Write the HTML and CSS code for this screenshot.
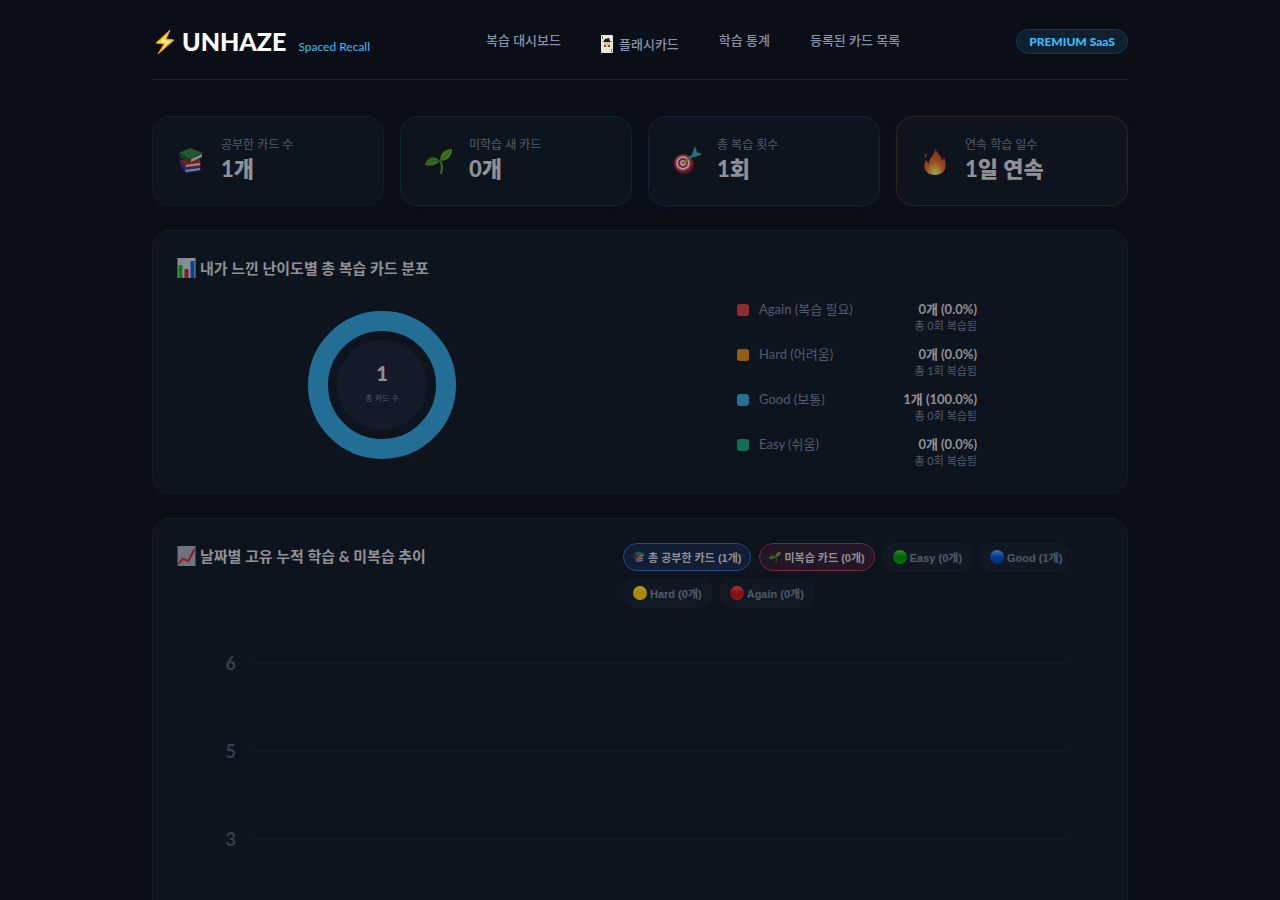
FILE: index.html
```html
<!DOCTYPE html>
<html lang="ko">
<head>
  <meta charset="UTF-8">
  <meta name="viewport" content="width=device-width, initial-scale=1.0">
  <title>UNHAZE - Spaced Recall</title>
  <link rel="stylesheet" href="styles.css">
</head>
<body>
  <!-- Shared icons -->
  <svg class="sprite" aria-hidden="true">
    <symbol id="icon-books" viewBox="0 0 28 28">
      <path d="M4 19l4 7 16-2-1-5z" fill="#2b3c9c"/>
      <path d="M8 23l15-2v2L9 25z" fill="#c9cbd2"/>
      <path d="M3 13l5 8 16-2-1-7z" fill="#c4231e"/>
      <path d="M9 18l14-2v2L9 20z" fill="#dedede"/>
      <path d="M2 12l2 7 4 2-3-7z" fill="#293b97"/>
      <path d="M2 6L13 1l13 5-13 6z" fill="#32843a"/>
      <path d="M2 6l11 6v4L3 11z" fill="#1c5726"/>
      <path d="M14 12l11-5v3l-11 5z" fill="#d5d8d2"/>
    </symbol>
    <symbol id="icon-sprout" viewBox="0 0 28 28">
      <path d="M15 14c3 3 2 8 1 13" fill="none" stroke="#59a51b" stroke-width="2"/>
      <path d="M15 14c0-8 5-12 12-12 0 7-4 12-12 12z" fill="#63b320"/>
      <path d="M15 14C10 8 3 9 0 18c7 2 11 0 15-4z" fill="#579f1b"/>
      <path d="M15 14c4-3 7-6 10-10M15 14c-5-1-9 0-13 3" fill="none" stroke="#397514"/>
    </symbol>
  </svg>

  <div class="container">
    <header class="site-header">
      <a href="#" class="logo">
        <svg class="logo-bolt" viewBox="0 0 20 26" aria-hidden="true">
          <path d="M15 1L1 14l8 1-6 10L19 11l-8-1z" fill="#ffc928" stroke="#f59a13"/>
          <path d="M12 6l-7 7 6 1-3 5 7-7-6-1z" fill="#fff5a8"/>
        </svg>
        <span class="logo-name">UNHAZE</span>
        <span class="logo-tagline">Spaced Recall</span>
      </a>
      <nav class="main-nav">
        <a href="#">복습 대시보드</a>
        <a href="#" class="with-icon">
          <svg viewBox="0 0 12 18" aria-hidden="true">
            <rect width="12" height="18" rx="1" fill="#eee8dc"/>
            <path d="M2 7l2-3 4-1 1 3 2 1z" fill="#20252a"/>
            <rect x="3" y="7" width="6" height="5" fill="#dcc0a8"/>
            <path d="M3 10h2v2H3zM7 10h2v2H7z" fill="#a33c39"/>
            <path d="M1 1h1v3H1zM10 14h1v3h-1z" fill="#77736e"/>
          </svg>
          플래시카드
        </a>
        <a href="#">학습 통계</a>
        <a href="#">등록된 카드 목록</a>
      </nav>
      <span class="badge">PREMIUM SaaS</span>
    </header>

    <main>
      <!-- Summary cards -->
      <section class="stats">
        <div class="stat-card">
          <svg class="stat-icon" aria-hidden="true"><use href="#icon-books"/></svg>
          <div>
            <div class="stat-label">공부한 카드 수</div>
            <div class="stat-value">1개</div>
          </div>
        </div>
        <div class="stat-card green">
          <svg class="stat-icon" aria-hidden="true"><use href="#icon-sprout"/></svg>
          <div>
            <div class="stat-label">미학습 새 카드</div>
            <div class="stat-value">0개</div>
          </div>
        </div>
        <div class="stat-card blue">
          <svg class="stat-icon" viewBox="0 0 28 28" aria-hidden="true">
            <ellipse cx="11" cy="17" rx="10" ry="10" fill="#8f1720"/>
            <circle cx="10" cy="16" r="9" fill="#d52b34"/>
            <circle cx="10" cy="16" r="7" fill="#eee"/>
            <circle cx="10" cy="16" r="5" fill="#d52b34"/>
            <circle cx="10" cy="16" r="3" fill="#eee"/>
            <circle cx="10" cy="16" r="1" fill="#c5242e"/>
            <path d="M10 16l9-7" stroke="#d99a35" stroke-width="2"/>
            <path d="M15 12l8-6M20 7l2-5 1 4 4 1-5 2z" fill="#43a8bb" stroke="#43a8bb" stroke-width="2"/>
          </svg>
          <div>
            <div class="stat-label">총 복습 횟수</div>
            <div class="stat-value">1회</div>
          </div>
        </div>
        <div class="stat-card amber">
          <svg class="stat-icon" viewBox="0 0 28 28" aria-hidden="true">
            <defs>
              <radialGradient id="flame" cx="50%" cy="90%" r="75%">
                <stop offset="0" stop-color="#fff49b"/>
                <stop offset=".25" stop-color="#ffc22e"/>
                <stop offset=".5" stop-color="#f4762a"/>
                <stop offset="1" stop-color="#d9361e"/>
              </radialGradient>
            </defs>
            <path d="M14 0c0 5 7 8 7 14l2-4c4 9 1 18-9 18S1 20 5 13l3 4c-1-6 7-9 6-17zM5 6c2 3 0 4-1 5-1-2 0-3 1-5z" fill="url(#flame)"/>
          </svg>
          <div>
            <div class="stat-label">연속 학습 일수</div>
            <div class="stat-value">1일 연속</div>
          </div>
        </div>
      </section>

      <!-- Difficulty distribution -->
      <section class="panel">
        <h2 class="panel-title">
          <svg viewBox="0 0 18 20" aria-hidden="true">
            <rect width="18" height="20" fill="#888c94"/>
            <path d="M1 7h4v13H1z" fill="#087d17"/>
            <path d="M7 11h4v9H7z" fill="#8c1520"/>
            <path d="M13 3h4v17h-4z" fill="#0b438e"/>
          </svg>
          내가 느낀 난이도별 총 복습 카드 분포
        </h2>
        <div class="distribution">
          <div class="donut">
            <div class="donut-center">
              <strong>1</strong>
              <span>총 카드 수</span>
            </div>
          </div>
          <ul class="legend">
            <li>
              <span class="swatch again"></span>
              <span class="legend-label">Again (복습 필요)</span>
              <div class="legend-value"><strong>0개 (0.0%)</strong><span>총 0회 복습됨</span></div>
            </li>
            <li>
              <span class="swatch hard"></span>
              <span class="legend-label">Hard (어려움)</span>
              <div class="legend-value"><strong>0개 (0.0%)</strong><span>총 1회 복습됨</span></div>
            </li>
            <li>
              <span class="swatch good"></span>
              <span class="legend-label">Good (보통)</span>
              <div class="legend-value"><strong>1개 (100.0%)</strong><span>총 0회 복습됨</span></div>
            </li>
            <li>
              <span class="swatch easy"></span>
              <span class="legend-label">Easy (쉬움)</span>
              <div class="legend-value"><strong>0개 (0.0%)</strong><span>총 0회 복습됨</span></div>
            </li>
          </ul>
        </div>
      </section>

      <!-- Trend chart -->
      <section class="panel">
        <div class="trend-header">
          <h2 class="panel-title">
            <svg viewBox="0 0 18 20" aria-hidden="true">
              <rect width="18" height="20" fill="#6d747d"/>
              <path d="M1 18l4-5 6 2 6-12" fill="none" stroke="#8e1b2b" stroke-width="2"/>
            </svg>
            날짜별 고유 누적 학습 &amp; 미복습 추이
          </h2>
          <div class="filters">
            <button type="button" class="pill pill-total"><svg aria-hidden="true"><use href="#icon-books"/></svg>총 공부한 카드 (1개)</button>
            <button type="button" class="pill pill-new"><svg aria-hidden="true"><use href="#icon-sprout"/></svg>미복습 카드 (0개)</button>
            <button type="button" class="pill"><span class="dot dot-easy"></span>Easy (0개)</button>
            <button type="button" class="pill"><span class="dot dot-good"></span>Good (1개)</button>
            <button type="button" class="pill"><span class="dot dot-hard"></span>Hard (0개)</button>
            <button type="button" class="pill"><span class="dot dot-again"></span>Again (0개)</button>
          </div>
        </div>
        <div class="chart">
          <div class="chart-row"><span>6</span></div>
          <div class="chart-row"><span>5</span></div>
          <div class="chart-row"><span>3</span></div>
        </div>
      </section>
    </main>
  </div>
</body>
</html>
```
FILE: styles.css
```css
* {
  box-sizing: border-box;
}
body {
  margin: 0;
  background-color: #0a0e17;
  color: #909196;
  font-family: Lato, 'Noto Sans CJK KR', sans-serif;
}
a {
  color: inherit;
  text-decoration: none;
}
.sprite {
  display: none;
}
.container {
  max-width: 1024px;
  margin: 0 auto;
  padding: 0 24px;
}

/* Header */
.site-header {
  display: flex;
  align-items: center;
  justify-content: space-between;
  padding: 24px 0 20px;
  margin-bottom: 36px;
  border-bottom: 1px solid #16233a;
}
.logo {
  display: flex;
  align-items: baseline;
}
.logo-bolt {
  width: 20px;
  height: 26px;
  margin: 0 7px 0 3px;
  align-self: center;
}
.logo-name {
  color: #fff;
  font-size: 25px;
  font-weight: 900;
  line-height: 35px;
}
.logo-tagline {
  margin-left: 12px;
  color: #38bdf8;
  font-size: 12px;
  line-height: 16px;
}
.main-nav {
  display: flex;
  align-items: flex-start;
  gap: 40px;
  color: #8593a9;
  font-size: 13px;
  font-weight: 500;
  line-height: 24px;
}
.with-icon {
  display: flex;
  align-items: center;
  gap: 6px;
  padding-top: 4px;
}
.with-icon svg {
  width: 12px;
  height: 18px;
}
.badge {
  padding: 0 12px;
  border: 1px solid #17375a;
  border-radius: 20px;
  background-color: #0f202e;
  color: #38bdf8;
  font-size: 12px;
  font-weight: 900;
  line-height: 23px;
}

/* Summary cards */
.stats {
  display: grid;
  grid-template-columns: repeat(4, 1fr);
  gap: 16px;
  margin-bottom: 24px;
}
.stat-card {
  display: flex;
  align-items: center;
  gap: 16px;
  padding: 18px 24px;
  border: 1px solid #171c27;
  border-radius: 18px;
  background-color: #0e141e;
}
.stat-card.green {
  border-color: #0b2a2b;
  box-shadow: 0 0 15px rgba(16, 185, 129, 0.04);
}
.stat-card.blue {
  border-color: #13213b;
  box-shadow: 0 0 15px rgba(59, 130, 246, 0.04);
}
.stat-card.amber {
  border-color: #30251c;
  box-shadow: 0 0 15px rgba(245, 158, 11, 0.04);
}
.stat-icon {
  width: 28px;
  height: 28px;
  opacity: 0.6;
}
.stat-label {
  color: #525b6b;
  font-size: 12px;
  line-height: 20px;
}
.stat-value {
  font-size: 22px;
  font-weight: 900;
  line-height: 28px;
  padding-bottom: 4px;
}

/* Panels */
.panel {
  margin-bottom: 24px;
  padding: 24px;
  border: 1px solid #171c27;
  border-radius: 18px;
  background-color: #0e141e;
}
.panel-title {
  display: flex;
  align-items: center;
  gap: 4px;
  margin: 0;
  font-size: 15px;
  font-weight: 700;
  line-height: 26px;
}
.panel-title svg {
  width: 19px;
  height: 20px;
}

/* Difficulty distribution */
.distribution {
  display: grid;
  grid-template-columns: 1fr 1.2fr;
  align-items: center;
  justify-items: center;
  gap: 24px;
  margin-top: 20px;
}
.donut {
  display: flex;
  align-items: center;
  justify-content: center;
  width: 148px;
  height: 148px;
  border: 20px solid #236e94;
  border-radius: 50%;
}
.donut-center {
  display: flex;
  flex-direction: column;
  align-items: center;
  justify-content: center;
  width: 90px;
  height: 90px;
  padding-bottom: 4px;
  border-radius: 50%;
  background-color: #141a27;
}
.donut-center strong {
  font-size: 20px;
  font-weight: 900;
  line-height: 30px;
}
.donut-center span {
  color: #525b6b;
  font-size: 8px;
  line-height: 20px;
}
.legend {
  display: flex;
  flex-direction: column;
  gap: 12px;
  width: 240px;
  margin: 0;
  padding: 0;
  list-style: none;
}
.legend li {
  display: flex;
  align-items: flex-start;
  font-size: 13px;
  line-height: 17px;
}
.swatch {
  width: 12px;
  height: 12px;
  margin: 3px 10px 0 0;
  border-radius: 3px;
}
.again {
  background-color: #8e2e34;
}
.hard {
  background-color: #925f12;
}
.good {
  background-color: #236e94;
}
.easy {
  background-color: #0e6f54;
}
.legend-label {
  color: #525b6b;
}
.legend-value {
  display: flex;
  flex-direction: column;
  margin-left: auto;
  text-align: right;
}
.legend-value span {
  color: #525b6b;
  font-size: 11px;
  line-height: 16px;
}

/* Trend chart */
.trend-header {
  display: flex;
  align-items: flex-start;
  justify-content: space-between;
}
.filters {
  display: flex;
  flex-wrap: wrap;
  gap: 8px;
  width: 480px;
}
.pill {
  display: flex;
  align-items: center;
  gap: 3px;
  height: 28px;
  padding: 0 9px;
  border: 1px solid #171c27;
  border-radius: 20px;
  background-color: #121823;
  color: #525b6b;
  font-family: 'Liberation Sans', 'Noto Sans CJK KR', sans-serif;
  font-size: 11px;
  font-weight: 700;
  cursor: pointer;
}
.pill svg {
  width: 12px;
  height: 12px;
  opacity: 0.6;
}
.pill-total {
  border-color: #214b8a;
  background-color: #111e33;
  color: #909196;
}
.pill-new {
  border-color: #7a2440;
  background-color: #231725;
  color: #909196;
}
.dot {
  width: 14px;
  height: 14px;
  border-radius: 50%;
}
.dot-easy {
  background: linear-gradient(#278b2b, #036006 50%, #057a09);
}
.dot-good {
  background: linear-gradient(#4674a5, #053a8c 50%, #03317c);
}
.dot-hard {
  background: linear-gradient(#b59b2e, #a48507 50%, #b1940c);
}
.dot-again {
  background: linear-gradient(#ad3638, #830f13 50%, #96151a);
}
.chart {
  padding: 12px 36px 64px 0;
}
.chart-row {
  display: flex;
  align-items: center;
  gap: 16px;
  height: 88px;
  color: #363f50;
  font-size: 18px;
  font-weight: 700;
}
.chart-row span {
  width: 59px;
  text-align: right;
}
.chart-row::after {
  content: '';
  flex: 1;
  height: 2px;
  background-color: #131924;
}
```
